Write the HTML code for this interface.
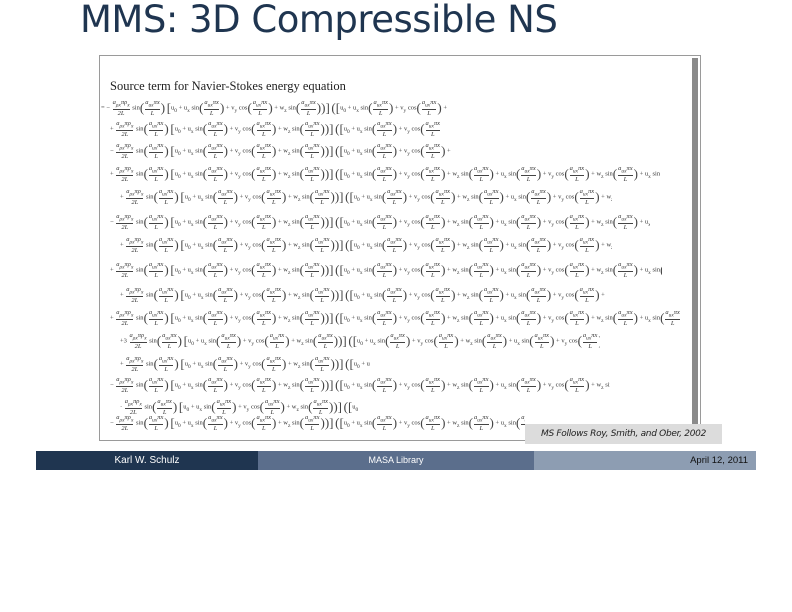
<!DOCTYPE html>
<html><head><meta charset="utf-8"><style>
body{margin:0;width:792px;height:612px;background:#fff;position:relative;overflow:hidden;font-family:"Liberation Sans",sans-serif}
h1{position:absolute;left:80px;top:-2px;margin:0;font-weight:normal;font-size:37px;color:#1f3550;font-family:"DejaVu Sans","Liberation Sans",sans-serif;letter-spacing:-0.5px}
.frame{position:absolute;left:99px;top:55px;width:602px;height:386px;border:1px solid #9a9a9a;background:#fff;box-sizing:border-box}
.shadow{position:absolute;left:692px;top:58px;width:6px;height:380px;background:#8a8a8a}
.title{position:absolute;left:110px;top:79px;font-family:"Liberation Serif",serif;font-size:12.5px;color:#222}
.ln{position:absolute;white-space:nowrap;overflow:hidden;font-family:"Liberation Serif",serif;font-size:6.5px;color:#333;height:20px;line-height:20px}
.f{display:inline-block;vertical-align:middle;text-align:center;line-height:7px;margin:0 1px}
.f i{display:block;font-style:italic}
.f i:first-child{border-bottom:0.6px solid #444}
.p{font-size:13px;vertical-align:middle;color:#444}
.note{position:absolute;left:525px;top:424px;width:197px;height:20px;background:#dcdcdc;font-style:italic;font-size:9px;line-height:20px;text-align:center;color:#222;font-family:"DejaVu Sans",sans-serif;letter-spacing:-0.3px}
.foot{position:absolute;top:451px;height:19px;font-size:10px;line-height:19px}
</style></head><body>
<h1>MMS: 3D Compressible NS</h1>
<div class="frame"></div>
<div class="shadow"></div>
<div class="title">Source term for Navier-Stokes energy equation</div>
<div id="lines"></div>
<div class="note">MS Follows Roy, Smith, and Ober, 2002</div>
<div class="foot" style="left:36px;width:222px;background:#1f3550;color:#fff;text-align:center">Karl W. Schulz</div>
<div class="foot" style="left:258px;width:276px;background:#5b6e8c;color:#fff;text-align:center;font-size:9px">MASA Library</div>
<div class="foot" style="left:534px;width:222px;background:#8d9db2;color:#111;text-align:right;padding-right:8px;box-sizing:border-box;font-size:9.5px">April 12, 2011</div>
<script>
var T='<span class="f"><i>a<sub>ux</sub>πx</i><i>L</i></span>';
function term(fn,v){return ' + '+v+' '+fn+'<span class="p">(</span>'+T+'<span class="p">)</span>';}
function row(lead){var s=lead+' <span class="p">[</span>u<sub>0</sub>';
for(var k=0;k<12;k++){s+=term(['sin','cos','sin'][k%3],['u<sub>x</sub>','v<sub>y</sub>','w<sub>z</sub>'][k%3]);if(k==2)s+='<span class="p">)]</span> <span class="p">([</span>u<sub>0</sub>';}return s;}
var rows=[[108,101,447,'= −'],[129,110,440,'+'],[151,110,452,'−'],[174,110,660,'+'],[197,120,612,'+'],[222,110,650,'−'],[245,120,612,'+'],[270,110,662,'+'],[295,120,605,'+'],[318,110,680,'+'],[341,120,600,'+3'],[364,120,370,'+'],[385,110,610,'−'],[407,120,360,'·'],[423,110,525,'−']];
var h='';rows.forEach(function(r){var lead=r[3]+' <span class="f"><i>a<sub>ρx</sub>πρ<sub>x</sub></i><i>2L</i></span> sin<span class="p">(</span>'+T+'<span class="p">)</span>';
h+='<div class="ln" style="left:'+r[1]+'px;top:'+(r[0]-10)+'px;width:'+(r[2]-r[1])+'px">'+row(lead)+'</div>';});
document.getElementById('lines').innerHTML=h;
</script>
</body></html>
